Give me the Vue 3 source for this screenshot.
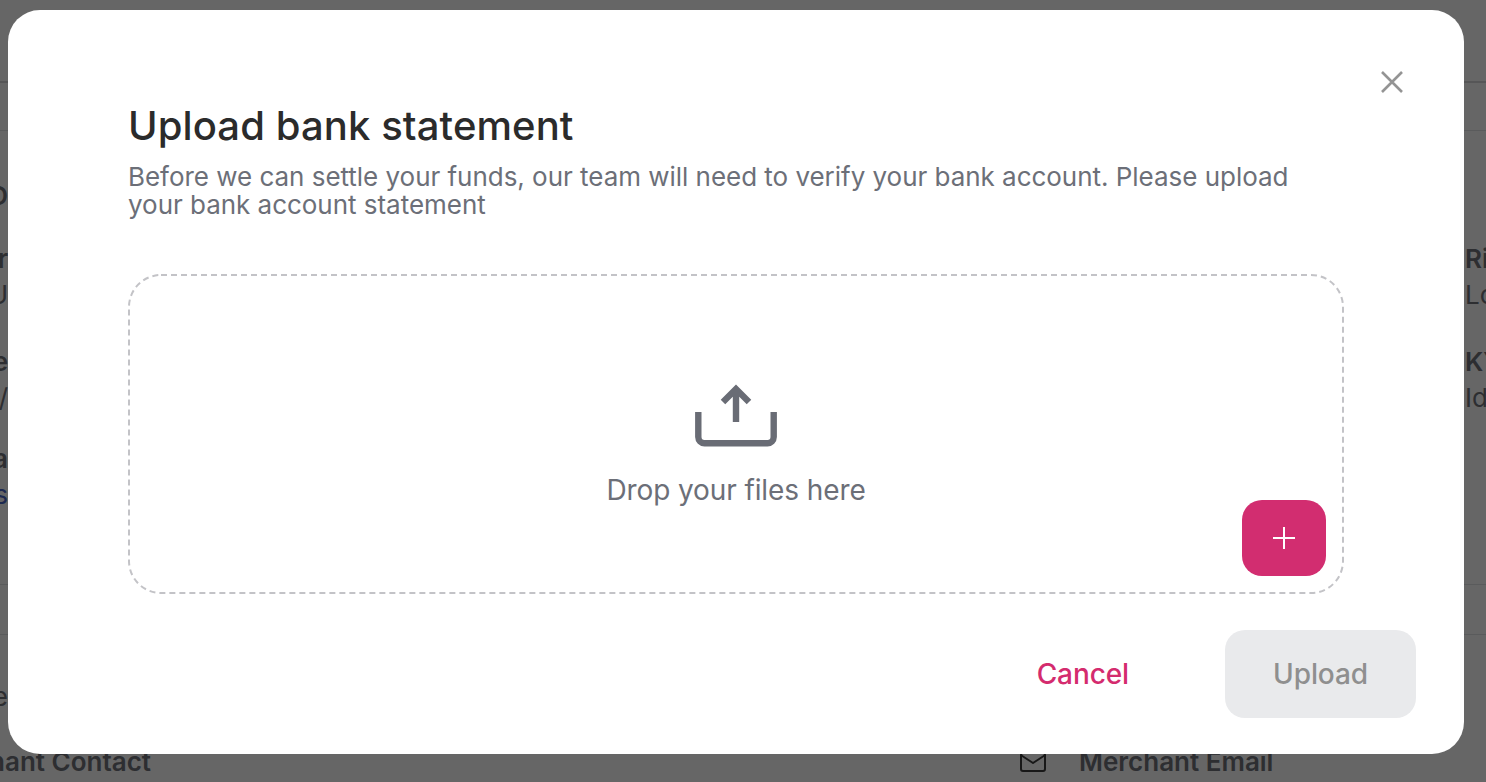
<template>
  <div class="page">
    <div class="topbar"></div>
    <div class="tabs"></div>
    <section class="details">
      <div class="left-col">
        <p class="heading">D</p>
        <div class="fields">
          <div class="field" v-for="f in leftFields" :key="f.label">
            <b>{{ f.label }}</b>
            <span :class="{ link: f.link }">{{ f.value }}</span>
          </div>
        </div>
      </div>
      <div class="right-col">
        <div class="fields">
          <div class="field" v-for="f in rightFields" :key="f.label">
            <b>{{ f.label }}</b>
            <span>{{ f.value }}</span>
          </div>
        </div>
      </div>
    </section>
    <div class="subtabs"></div>
    <section class="contact">
      <div class="contact-top"><span>e</span></div>
      <div class="contact-row">
        <div class="contact-name"><b>Merchant Contact</b></div>
        <div class="contact-mail">
          <svg width="26" height="20" viewBox="0 0 26 20" fill="none" stroke="#3c3c3c" stroke-width="2" stroke-linejoin="round" stroke-linecap="round">
            <rect x="1" y="1" width="24" height="18" rx="2" />
            <path d="M1.5 3.5 13 11l11.500-7.500" />
          </svg>
          <b>Merchant Email</b>
        </div>
      </div>
    </section>
  </div>

  <div class="overlay">
    <div class="modal">
      <button class="close" aria-label="Close">
        <svg width="26" height="26" viewBox="0 0 26 26" fill="none" stroke="#949494" stroke-width="2.600">
          <path d="M3 3l20 20M23 3 3 23" />
        </svg>
      </button>
      <h1>Upload bank statement</h1>
      <p class="desc">Before we can settle your funds, our team will need to verify your bank account. Please upload your bank account statement</p>

      <div class="dropzone">
        <svg class="dash" width="1216" height="320" fill="none">
          <rect x="1" y="1" width="1214" height="318" rx="32" stroke="#c3c3c7" stroke-width="2" stroke-dasharray="6 4" />
        </svg>
        <svg class="upload-icon" width="84" height="64" viewBox="0 0 84 64" fill="none" stroke="#696c75" stroke-width="6.400">
          <path d="M4.300 29v25a6.200 6.200 0 0 0 6.200 6.200h63a6.200 6.200 0 0 0 6.200-6.200V29" />
          <path d="M42 39V6M29 19 42 6l13 13" />
        </svg>
        <span class="drop-text">Drop your files here</span>
        <button class="add" aria-label="Add file">
          <svg width="24" height="24" viewBox="0 0 24 24" stroke="#fff" stroke-width="2">
            <path d="M12 1v22M1 12h22" />
          </svg>
        </button>
      </div>

      <div class="actions">
        <button class="cancel">Cancel</button>
        <button class="upload" disabled>Upload</button>
      </div>
    </div>
  </div>
</template>

<script setup>
const leftFields = [
  { label: 'tr', value: 'U' },
  { label: 'e', value: 't /' },
  { label: 'a', value: 's', link: true },
]

const rightFields = [
  { label: 'Ri', value: 'Lo' },
  { label: 'KY', value: 'Id' },
]
</script>

<style>
html,
body {
  margin: 0;
  overflow: hidden;
}
</style>

<style scoped>
.page {
  height: 782px;
  overflow: hidden;
  background: #fff;
  color: #70737c;
  font-family: Inter, sans-serif;
  font-size: 26px;
}
.topbar {
  height: 81px;
  border-bottom: 2px solid #d6d7da;
}
.tabs {
  height: 47px;
  border-bottom: 1px solid #e2e3e6;
}
.details {
  height: 453px;
  display: flex;
  justify-content: space-between;
  border-bottom: 1px solid #e2e3e6;
}
.left-col {
  width: 8px;
  display: flex;
  flex-direction: column;
  align-items: flex-end;
  overflow: hidden;
  padding-top: 47px;
}
.heading {
  margin: 0 0 27px;
  line-height: 36px;
  font-weight: 600;
  white-space: nowrap;
}
.right-col {
  width: 21px;
  overflow: hidden;
  padding-top: 110px;
}
.fields {
  display: grid;
  grid-template-rows: 103px 97px 1fr;
}
.left-col .field {
  align-items: flex-end;
}
.field {
  display: flex;
  flex-direction: column;
  line-height: 36px;
  white-space: nowrap;
}
.field b {
  font-weight: 600;
}
.link {
  color: #4a66c8;
}
.subtabs {
  height: 49px;
  border-bottom: 1px solid #e2e3e6;
}
.contact-top {
  width: 8px;
  display: flex;
  justify-content: flex-end;
  margin-top: 44px;
  line-height: 36px;
}
.contact-row {
  display: flex;
  margin-top: 29px;
  line-height: 36px;
}
.contact-name {
  width: 151px;
  display: flex;
  justify-content: flex-end;
  white-space: nowrap;
}
.contact-name b,
.contact-mail b {
  font-weight: 600;
}
.contact-mail {
  margin-left: 869px;
  display: flex;
  align-items: center;
  gap: 33px;
}

.overlay {
  position: fixed;
  inset: 0;
  background: rgba(0, 0, 0, 0.6);
  padding: 10px 22px 28px 8px;
  box-sizing: border-box;
  display: flex;
  font-family: Inter, sans-serif;
}
.modal {
  position: relative;
  flex: 1;
  background: #fff;
  border-radius: 32px;
  padding: 88px 48px 36px 120px;
  display: flex;
  flex-direction: column;
}
.close {
  position: absolute;
  top: 59px;
  right: 59px;
  padding: 0;
  border: 0;
  background: none;
  display: flex;
}
h1 {
  margin: 0;
  font-size: 40px;
  line-height: 56px;
  font-weight: 450;
  letter-spacing: 0.1px;
  color: #2b2b2b;
}
.desc {
  margin: 9px 0 0;
  width: 1180px;
  font-size: 26px;
  line-height: 28px;
  letter-spacing: -0.03px;
  color: #6c6f78;
}
.dropzone {
  position: relative;
  margin-top: 55px;
  width: 1216px;
  height: 320px;
  display: flex;
  flex-direction: column;
  align-items: center;
  justify-content: center;
  flex: none;
}
.dash {
  position: absolute;
  inset: 0;
}
.upload-icon {
  margin-top: 25px;
}
.drop-text {
  margin-top: 23px;
  font-size: 28px;
  line-height: 40px;
  letter-spacing: -0.1px;
  color: #6c6f78;
}
.add {
  position: absolute;
  right: 18px;
  bottom: 18px;
  width: 84px;
  height: 76px;
  border: 0;
  padding: 0;
  border-radius: 20px;
  background: #d22d70;
  display: flex;
  align-items: center;
  justify-content: center;
}
.actions {
  margin-top: 36px;
  display: flex;
  justify-content: flex-end;
  align-items: center;
  gap: 96px;
}
.actions button {
  font-family: inherit;
  font-size: 28px;
  font-weight: 500;
  letter-spacing: -0.1px;
  border: 0;
  background: none;
  padding: 0;
}
.cancel {
  color: #d42b6e;
}
.actions .upload {
  width: 191px;
  height: 88px;
  border-radius: 20px;
  background: #e9eaec;
  color: #8f8f8f;
}
</style>
